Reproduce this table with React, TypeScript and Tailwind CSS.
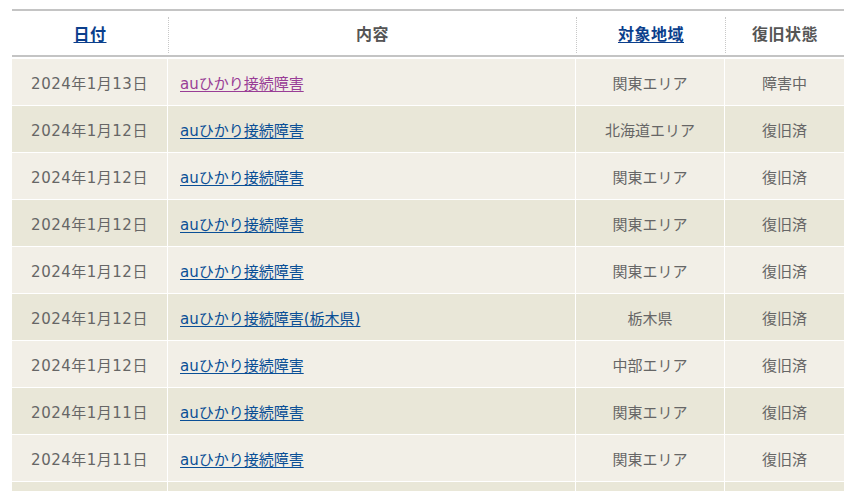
import React from "react";

const rows = [
  { date: "2024年1月13日", title: "auひかり接続障害", area: "関東エリア", status: "障害中", visited: true },
  { date: "2024年1月12日", title: "auひかり接続障害", area: "北海道エリア", status: "復旧済" },
  { date: "2024年1月12日", title: "auひかり接続障害", area: "関東エリア", status: "復旧済" },
  { date: "2024年1月12日", title: "auひかり接続障害", area: "関東エリア", status: "復旧済" },
  { date: "2024年1月12日", title: "auひかり接続障害", area: "関東エリア", status: "復旧済" },
  { date: "2024年1月12日", title: "auひかり接続障害(栃木県)", area: "栃木県", status: "復旧済" },
  { date: "2024年1月12日", title: "auひかり接続障害", area: "中部エリア", status: "復旧済" },
  { date: "2024年1月11日", title: "auひかり接続障害", area: "関東エリア", status: "復旧済" },
  { date: "2024年1月11日", title: "auひかり接続障害", area: "関東エリア", status: "復旧済" },
];

const font = { fontFamily: '"DejaVu Sans", "Noto Sans CJK JP", sans-serif' };

export default function App() {
  return (
    <div className="w-[847px] h-[491px] overflow-hidden bg-white pt-[9px] pl-[12px]" style={font}>
      <div className="w-[832px]">
        <div className="border-t-2 border-b-2 border-[#c4c4c4] h-[48px] grid grid-cols-[156px_408px_149px_119px] text-[16px] font-bold text-[#555]">
          <div className="pt-[6px] pb-[2px] flex items-center justify-center">
            <a className="text-[#0b3f8c] underline underline-offset-2 tracking-[0.5px]" href="#">日付</a>
          </div>
          <div className="pt-[6px] pb-[2px]">
            <div className="h-full border-l border-dotted border-[#c8c8c8] flex items-center justify-center tracking-[0.5px]">内容</div>
          </div>
          <div className="pt-[6px] pb-[2px]">
            <div className="h-full border-l border-dotted border-[#c8c8c8] flex items-center justify-center">
              <a className="text-[#0b3f8c] underline underline-offset-2 tracking-[0.5px]" href="#">対象地域</a>
            </div>
          </div>
          <div className="pt-[6px] pb-[2px]">
            <div className="h-full border-l border-dotted border-[#c8c8c8] flex items-center justify-center tracking-[0.5px]">復旧状態</div>
          </div>
        </div>
        <div className="mt-[2px] flex flex-col gap-px text-[15px] text-[#666]">
          {rows.map((r, i) => {
            const bg = i % 2 === 0 ? "bg-[#f2efe7]" : "bg-[#e9e7d8]";
            return (
              <div key={i} className="grid grid-cols-[155px_407px_148px_119px] gap-x-px h-[46px]">
                <div className={`flex items-center justify-center pt-[4px] tracking-[0.5px] ${bg}`}>{r.date}</div>
                <div className={`flex items-center pl-[12px] pt-[4px] ${bg}`}>
                  <a
                    href="#"
                    className={`underline underline-offset-2 ${r.visited ? "text-[#993d96]" : "text-[#0a4f96]"}`}
                  >
                    {r.title}
                  </a>
                </div>
                <div className={`flex items-center justify-center pt-[4px] ${bg}`}>{r.area}</div>
                <div className={`flex items-center justify-center pt-[4px] ${bg}`}>{r.status}</div>
              </div>
            );
          })}
          <div className="grid grid-cols-[155px_407px_148px_119px] gap-x-px h-[46px]">
            <div className="bg-[#e9e7d8]" />
            <div className="bg-[#e9e7d8]" />
            <div className="bg-[#e9e7d8]" />
            <div className="bg-[#e9e7d8]" />
          </div>
        </div>
      </div>
    </div>
  );
}
